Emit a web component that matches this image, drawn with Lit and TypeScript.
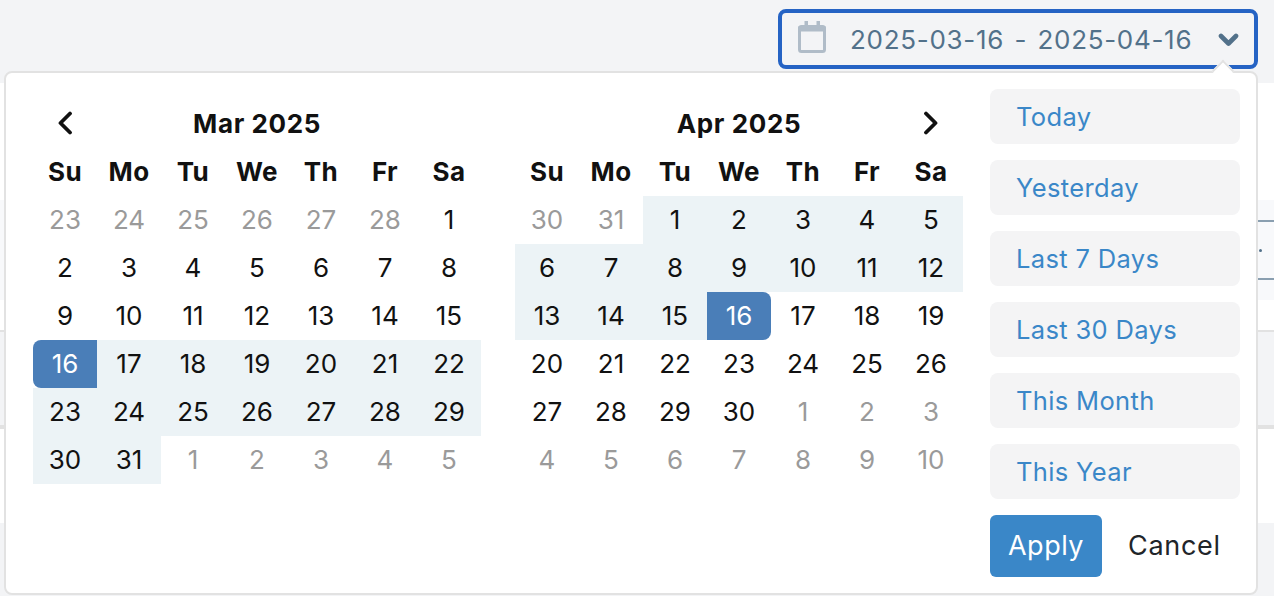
import { LitElement, html, css, svg } from "lit";
import { customElement } from "lit/decorators.js";
import { classMap } from "lit/directives/class-map.js";

type Day = { n: number; muted?: boolean; range?: boolean; start?: boolean; end?: boolean };

function march(): Day[] {
  const out: Day[] = [];
  for (const n of [23, 24, 25, 26, 27, 28]) out.push({ n, muted: true });
  for (let n = 1; n <= 31; n++) out.push({ n, range: n > 16, start: n === 16 });
  for (let n = 1; n <= 5; n++) out.push({ n, muted: true });
  return out;
}
function april(): Day[] {
  const out: Day[] = [];
  for (const n of [30, 31]) out.push({ n, muted: true });
  for (let n = 1; n <= 30; n++) out.push({ n, range: n < 16, end: n === 16 });
  for (let n = 1; n <= 10; n++) out.push({ n, muted: true });
  return out;
}

const WEEK = ["Su", "Mo", "Tu", "We", "Th", "Fr", "Sa"];
const SHORTCUTS = ["Today", "Yesterday", "Last 7 Days", "Last 30 Days", "This Month", "This Year"];

@customElement("app-root")
export class AppRoot extends LitElement {
  static styles = css`
    :host {
      display: block;
      position: relative;
      width: 1274px;
      height: 596px;
      overflow: hidden;
      background: #fff;
      font-family: "Inter", "Liberation Sans", sans-serif;
    }
    .page { display: flex; flex-direction: column; height: 596px; }
    .band-top { height: 83px; flex: none; background: #f3f4f6; }
    .gap-a { height: 117px; flex: none; }
    .table-band {
      height: 100px; flex: none; box-sizing: border-box; background: #f8f9fb;
      padding: 20px 0 0 60px; display: flex; flex-direction: column;
    }
    .rule { height: 2px; background: #8a9fb0; }
    .dots { height: 56px; display: flex; align-items: center; justify-content: flex-end; padding-right: 12px; }
    .dot { width: 3px; height: 3px; border-radius: 50%; background: #52718a; }
    .gap-b { height: 30px; flex: none; }
    .band-mid { height: 95px; flex: none; background: #f3f4f6; border-top: 2px solid #e2e2e2; box-sizing: border-box; }
    .rule-thick { height: 4px; flex: none; background: #e2e2e2; }
    .gap-c { height: 94px; flex: none; }
    .band-end { flex: 1; background: #f3f4f6; }

    .trigger {
      position: absolute; left: 778px; top: 9px; width: 480px; height: 60px;
      box-sizing: border-box; border: 4px solid #2563c4; border-radius: 8px; background: #f3f4f6;
      display: flex; align-items: center; padding-left: 16px; color: #52718a;
    }
    .trigger .cal { width: 28px; height: 32px; flex: none; margin-bottom: 4px; }
    .trigger .range {
      margin-left: 24px; padding-top: 2px; font-size: 26px; line-height: 32px; white-space: pre; flex: none;
      width: 345px; letter-spacing: 0.7px; word-spacing: 2.4px;
    }
    .trigger .chev { margin-left: 23px; width: 22px; height: 16px; flex: none; margin-top: 1px; }

    .popup {
      position: absolute; left: 4px; top: 71px; width: 1254px; height: 524px;
      box-sizing: border-box; background: #fff; border: 2px solid #e2e2e2; border-radius: 8px;
      padding: 16px 16px 16px 27px; display: flex;
    }
    .caret {
      position: absolute; left: 1209px; top: -10px; width: 16px; height: 16px;
      background: #fff; border-left: 2px solid #e2e2e2; border-top: 2px solid #e2e2e2;
      transform: rotate(45deg); box-sizing: border-box;
    }
    .cals { display: flex; gap: 34px; padding-top: 11px; }
    .cal-grid { display: grid; grid-template-columns: repeat(7, 64px); grid-auto-rows: 48px; }
    .head {
      grid-column: 1 / -1; display: flex; align-items: center; justify-content: center; position: relative;
      font-weight: 700; font-size: 26px; color: #111; letter-spacing: 0.6px; padding-bottom: 2px; box-sizing: border-box;
    }
    .nav { position: absolute; top: 11px; width: 16px; height: 24px; }
    .nav.prev { left: 24px; }
    .nav.next { right: 24px; }
    .wd {
      display: flex; align-items: center; justify-content: center; font-weight: 700; font-size: 26px;
      color: #111; letter-spacing: 0.4px; padding-bottom: 2px; box-sizing: border-box;
    }
    .d {
      display: flex; align-items: center; justify-content: center; font-size: 26px; color: #111;
      padding-bottom: 2px; box-sizing: border-box;
    }
    .d.muted { color: #9a9a9a; }
    .d.range { background: #ecf3f6; }
    .d.start, .d.end { background: #4a7eb8; color: #fff; }
    .d.start { border-radius: 8px 0 0 8px; }
    .d.end { border-radius: 0 8px 8px 0; }
    .side { margin-left: 27px; width: 250px; display: flex; flex-direction: column; }
    .shortcut {
      height: 55px; flex: none; margin-bottom: 16px; box-sizing: border-box; background: #f4f4f5;
      border-radius: 8px; color: #3a87c8; font-size: 25.5px; letter-spacing: 0.35px;
      display: flex; align-items: center; padding: 0 0 1px 26px;
    }
    .actions { display: flex; align-items: stretch; }
    .apply {
      width: 112px; height: 62px; box-sizing: border-box; border-radius: 6px; background: #3a87c8;
      color: #fff; font-size: 27px; letter-spacing: 0.5px; display: flex; align-items: center; justify-content: center; padding-bottom: 2px;
    }
    .cancel {
      margin-left: 26px; height: 62px; box-sizing: border-box; display: flex; align-items: center; font-size: 27px;
      letter-spacing: 0.7px; color: #212529; padding-bottom: 2px;
    }
  `;

  private grid(title: string, days: Day[], nav: "prev" | "next") {
    return html`<div class="cal-grid">
      <div class="head">
        ${title}
        <svg class="nav ${nav}" viewBox="0 0 16 24" fill="none" stroke="#111" stroke-width="3.8" stroke-linecap="round" stroke-linejoin="round">
          ${nav === "prev" ? svg`<path d="M13 2.5 L3.5 12 L13 21.5"/>` : svg`<path d="M3 2.5 L12.5 12 L3 21.5"/>`}
        </svg>
      </div>
      ${WEEK.map((w) => html`<div class="wd">${w}</div>`)}
      ${days.map(
        (d) => html`<div class=${classMap({ d: true, muted: !!d.muted, range: !!d.range, start: !!d.start, end: !!d.end })}>${d.n}</div>`
      )}
    </div>`;
  }

  render() {
    return html`
      <div class="page">
        <div class="band-top"></div>
        <div class="gap-a"></div>
        <div class="table-band">
          <div class="rule"></div>
          <div class="dots"><span class="dot"></span></div>
          <div class="rule"></div>
        </div>
        <div class="gap-b"></div>
        <div class="band-mid"></div>
        <div class="rule-thick"></div>
        <div class="gap-c"></div>
        <div class="band-end"></div>
      </div>

      <div class="trigger">
        <svg class="cal" viewBox="0 0 28 32" fill="none">
          <rect x="1.5" y="5.5" width="25" height="25" rx="2" stroke="#b0bcc8" stroke-width="3"></rect>
          <rect x="0" y="5" width="28" height="5.5" rx="1.5" fill="#b0bcc8"></rect>
          <rect x="6.5" y="0" width="3.5" height="6" fill="#b0bcc8"></rect>
          <rect x="18.5" y="0" width="3.5" height="6" fill="#b0bcc8"></rect>
        </svg>
        <span class="range">2025-03-16 - 2025-04-16</span>
        <svg class="chev" viewBox="0 0 22 16" fill="none" stroke="#52718a" stroke-width="4.6" stroke-linecap="round" stroke-linejoin="round">
          <path d="M3 4 L10.5 11.5 L18 4"></path>
        </svg>
      </div>

      <div class="popup">
        <div class="caret"></div>
        <div class="cals">
          ${this.grid("Mar 2025", march(), "prev")}
          ${this.grid("Apr 2025", april(), "next")}
        </div>
        <div class="side">
          ${SHORTCUTS.map((s) => html`<div class="shortcut">${s}</div>`)}
          <div class="actions">
            <div class="apply">Apply</div>
            <div class="cancel">Cancel</div>
          </div>
        </div>
      </div>
    `;
  }
}
